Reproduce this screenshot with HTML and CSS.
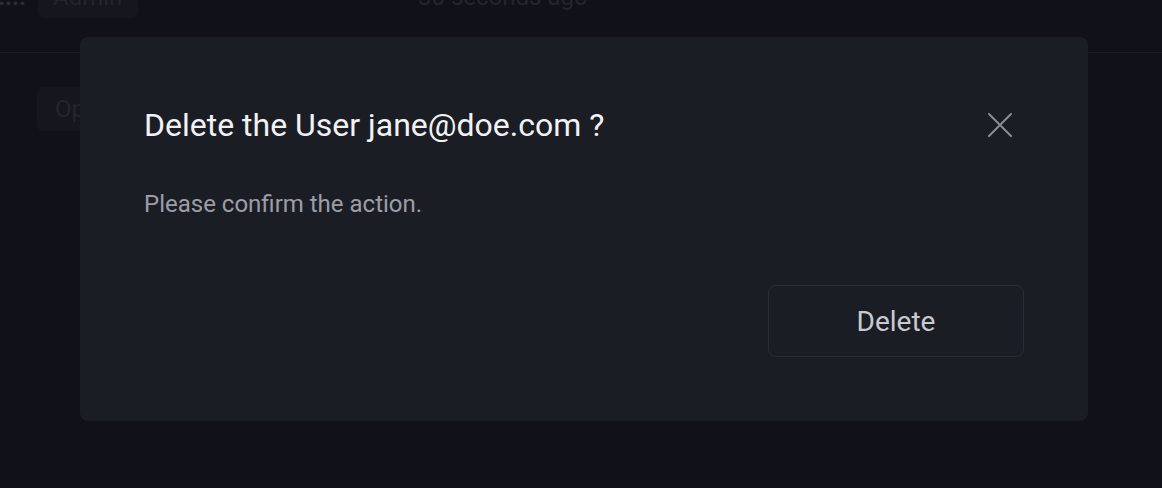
FILE: index.html
```html
<!DOCTYPE html>
<html lang="en">
<head>
<meta charset="utf-8">
<title>Delete user</title>
<link rel="stylesheet" href="styles.css">
</head>
<body>
<div class="page">
  <div class="row">
    <div class="cell cell-email"><span class="email-text">jane@does....</span></div>
    <div class="cell cell-role"><span class="badge">Admin</span></div>
    <div class="cell cell-time">30 seconds ago</div>
  </div>
  <div class="actions">
    <button class="ghost-btn">Open</button>
  </div>
</div>
<div class="backdrop">
  <div class="modal" role="dialog" aria-labelledby="modal-title">
    <div class="modal-header">
      <h2 id="modal-title" class="modal-title">Delete the User jane@doe.com ?</h2>
      <button class="close-btn" aria-label="Close">
        <svg width="24" height="24" viewBox="0 0 24 24" fill="none" stroke="currentColor" stroke-width="2" stroke-linecap="round">
          <path d="M1 1 L23 23 M23 1 L1 23"/>
        </svg>
      </button>
    </div>
    <p class="modal-body">Please confirm the action.</p>
    <div class="modal-footer">
      <button class="delete-btn">Delete</button>
    </div>
  </div>
</div>
</body>
</html>
```
FILE: styles.css
```css
* { box-sizing: border-box; }
html, body {
  margin: 0;
  padding: 0;
  height: 100%;
}
body {
  background: #111119;
  font-family: Roboto, "Liberation Sans", sans-serif;
  overflow: hidden;
}
.page {
  width: 1162px;
  height: 488px;
}
.row {
  display: flex;
  align-items: center;
  margin-top: -25px;
  height: 78px;
  border-bottom: 1px solid #1a1b23;
  padding-bottom: 33px;
}
.cell {
  font-size: 24px;
  color: #24252d;
  white-space: nowrap;
}
.cell-email {
  width: 38px;
  padding-right: 12px;
  display: flex;
  justify-content: flex-end;
  overflow: hidden;
  color: #2c2d35;
  font-weight: 700;
}
.email-text { flex-shrink: 0; }
.cell-role { width: 380px; }
.badge {
  display: inline-block;
  background: #15161e;
  border-radius: 6px;
  padding: 8px 15px;
  width: 100px;
  height: 42px;
  line-height: 26px;
}
.actions {
  padding: 34px 0 0 37px;
}
.ghost-btn {
  font-family: inherit;
  font-size: 24px;
  color: #24252d;
  background: #15161e;
  border: none;
  border-radius: 6px;
  height: 44px;
  padding: 0 18px;
}
.backdrop {
  position: fixed;
  inset: 0;
  padding: 37px 0 0 80px;
}
.modal {
  width: 1008px;
  height: 384px;
  background: #1b1d25;
  border-radius: 8px;
  padding: 64px;
  display: flex;
  flex-direction: column;
}
.modal-header {
  display: flex;
  align-items: center;
  justify-content: space-between;
  height: 48px;
}
.modal-title {
  margin: 0;
  font-size: 32px;
  font-weight: 400;
  color: #f2f2f4;
  line-height: 48px;
}
.close-btn {
  width: 48px;
  height: 48px;
  display: flex;
  align-items: center;
  justify-content: center;
  background: none;
  border: none;
  padding: 0;
  color: #8b8c93;
}
.modal-body {
  margin: 37px 0 0;
  font-size: 24px;
  line-height: 36px;
  color: #9c9da5;
}
.modal-footer {
  margin-top: 63px;
  display: flex;
  justify-content: flex-end;
}
.delete-btn {
  width: 256px;
  height: 72px;
  font-family: inherit;
  font-size: 28px;
  color: #c9cad0;
  background: transparent;
  border: 1.5px solid #2b2d36;
  border-radius: 8px;
}
```
